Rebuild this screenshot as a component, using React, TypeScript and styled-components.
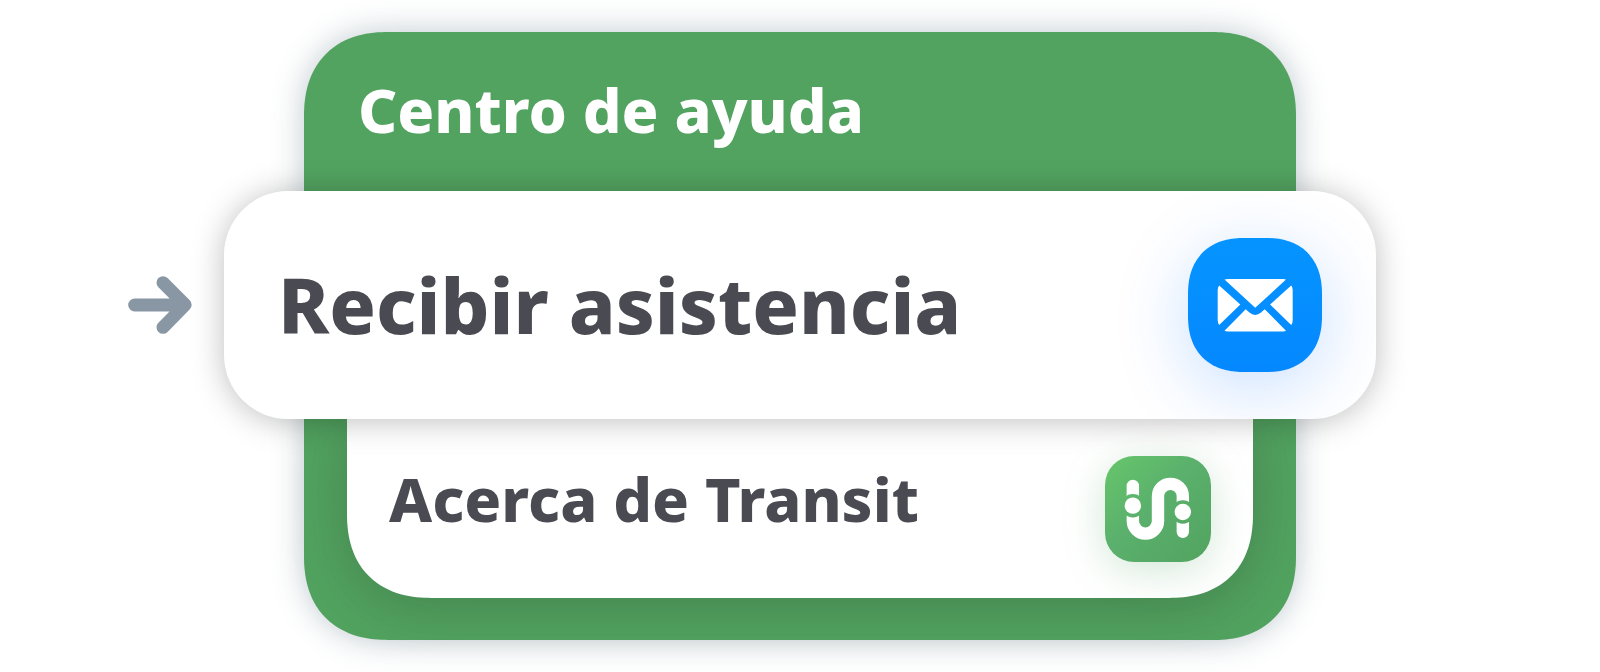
import React from "react";
import styled, { createGlobalStyle, css } from "styled-components";

const GlobalStyle = createGlobalStyle`
  *, *::before, *::after { box-sizing: border-box; }
  body {
    margin: 0;
    background: #fff;
    font-family: "Noto Sans", "Open Sans", sans-serif;
    font-weight: 800;
  }
`;

/* Continuous corners where the browser has them, plain round ones elsewhere. */
const smoothCorners = (round: string, smooth: string) => css`
  border-radius: ${round};
  @supports (corner-shape: superellipse(1.2)) {
    border-radius: ${smooth};
    corner-shape: superellipse(1.2);
  }
`;

const Page = styled.main`
  padding: 32px 0;
`;

const Card = styled.section`
  width: 62%;
  margin: 0 auto;
  padding-bottom: 42px;
  background: #52a360;
  box-shadow: 0 0 32px rgba(60, 90, 105, 0.32);
  ${smoothCorners("74px", "84px")}
`;

const Header = styled.header`
  height: 159px;
  padding: 30px 54px 0;
`;

const Title = styled.h1`
  margin: 0;
  color: #fff;
  font-size: 61px;
  line-height: 96px;
  font-weight: inherit;
  white-space: nowrap;
`;

const Callout = styled.div`
  position: relative;
  z-index: 1;
  display: grid;
  grid-template-columns: 64px 1fr;
  align-items: center;
  gap: 32px;
  margin: 0 -80px 0 -176px;
`;

const Panel = styled.div`
  margin: 0 43px;
`;

const RowLink = styled.a`
  display: flex;
  align-items: center;
  justify-content: space-between;
  color: #4a4a52;
  text-decoration: none;
  white-space: nowrap;
  background: #fff;
`;

const FeaturedRow = styled(RowLink)`
  height: 228px;
  padding: 0 54px;
  border-radius: 64px;
  overflow: hidden;
  box-shadow: 0 2px 32px rgba(0, 0, 0, 0.26);
`;

const PanelRow = styled(RowLink)`
  height: 179px;
  padding: 0 42px;
  box-shadow: 0 8px 56px rgba(40, 60, 40, 0.3);
  ${smoothCorners("0 0 72px 72px", "0 0 84px 84px")}
`;

const Label = styled.span<{ $large?: boolean }>`
  font-size: ${(p) => (p.$large ? "77px" : "61px")};
  line-height: ${(p) => (p.$large ? "112px" : "96px")};
  padding-bottom: ${(p) => (p.$large ? "0" : "20px")};
`;

const Tile = styled.span`
  flex: none;

  svg {
    display: block;
    width: 100%;
    height: 100%;
  }
`;

const MailTile = styled(Tile)`
  width: 134px;
  height: 134px;
  background: linear-gradient(#0594ff, #0588ff);
  box-shadow: 0 16px 72px rgba(0, 110, 255, 0.22);
  ${smoothCorners("50px", "56px")}
`;

const TransitTile = styled(Tile)`
  width: 106px;
  height: 106px;
  border-radius: 29px;
  background: linear-gradient(135deg, #67c66b, #5ab06c 45%, #52a360);
  box-shadow: 0 8px 40px rgba(82, 163, 96, 0.26);
`;

const Arrow = () => (
  <svg width="64" height="58" viewBox="0 0 192 175" aria-hidden="true">
    <path
      d="M19.5 87.5H170M105 20L172 87L105 155"
      fill="none"
      stroke="#8996a3"
      strokeWidth="39"
      strokeLinecap="round"
      strokeLinejoin="round"
    />
  </svg>
);

const MailIcon = () => (
  <svg viewBox="0 0 134 134" fill="#fff" aria-hidden="true">
    <path d="M36.5 41.6Q38 41 40 41H95Q97 41 98 41.6L67.2 69.8Z" />
    <path d="M31.2 47.4L52.3 66.4L31.2 87Q29.7 85 29.7 82V52Q29.7 49 31.2 47.4Z" />
    <path d="M103.2 47.4L82.1 66.4L103.2 87Q104.7 85 104.7 82V52Q104.7 49 103.2 47.4Z" />
    <path d="M57.7 71.2L61.4 74.6Q67.2 79.4 73 74.6L76.7 71.2L98 92.8Q97 93.4 95 93.4H40Q38 93.4 36.5 92.8Z" />
  </svg>
);

const TransitIcon = () => (
  <svg viewBox="0 0 316 316" aria-hidden="true">
    <mask id="stops" maskUnits="userSpaceOnUse" x="0" y="0" width="316" height="316">
      <rect width="316" height="316" fill="#fff" />
      <circle cx="83" cy="148" r="35" fill="#000" />
      <circle cx="232" cy="167" r="35" fill="#000" />
    </mask>
    <path
      d="M83 89V194a37.5 37.5 0 0 0 75 0V120a37 37 0 0 1 74 0V226"
      fill="none"
      stroke="#fff"
      strokeWidth="37"
      strokeLinecap="round"
      mask="url(#stops)"
    />
    <circle cx="83" cy="148" r="24.5" fill="#fff" />
    <circle cx="232" cy="167" r="24.5" fill="#fff" />
  </svg>
);

export default function App() {
  return (
    <>
      <GlobalStyle />
      <Page>
        <Card>
          <Header>
            <Title>Centro de ayuda</Title>
          </Header>
          <Callout>
            <Arrow />
            <FeaturedRow href="#asistencia">
              <Label $large>Recibir asistencia</Label>
              <MailTile>
                <MailIcon />
              </MailTile>
            </FeaturedRow>
          </Callout>
          <Panel>
            <PanelRow href="#acerca">
              <Label>Acerca de Transit</Label>
              <TransitTile>
                <TransitIcon />
              </TransitTile>
            </PanelRow>
          </Panel>
        </Card>
      </Page>
    </>
  );
}
